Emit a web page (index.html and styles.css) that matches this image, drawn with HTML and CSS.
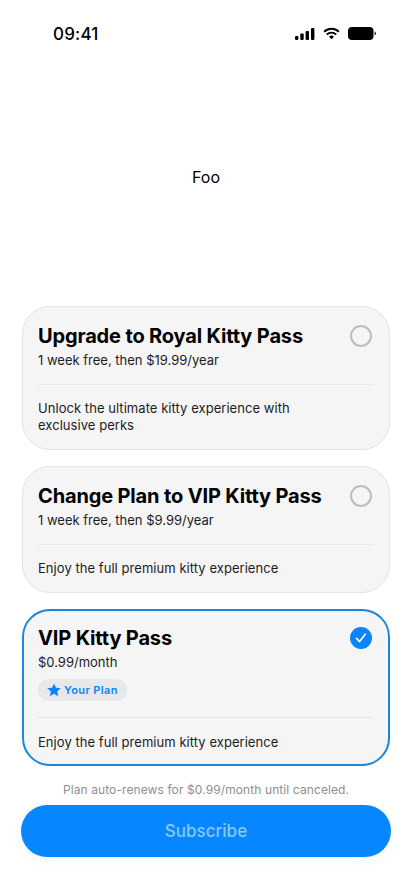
FILE: index.html
```html
<!DOCTYPE html>
<html lang="en">

<head>
    <meta charset="UTF-8">
    <meta name="viewport" content="width=device-width, initial-scale=1.0">
    <link rel="stylesheet" href="styles.css">
    <title>Kitty Pass</title>
</head>

<body>
    <div class="status-bar">
        <span class="status-time">09:41</span>
        <div class="status-icons">
            <svg class="icon-signal" width="20" height="12" viewBox="0 0 20 12">
                <rect x="0" y="8" width="3.4" height="4" rx="1.2"/>
                <rect x="5.3" y="5.5" width="3.4" height="6.5" rx="1"/>
                <rect x="10.6" y="3" width="3.4" height="9" rx="1"/>
                <rect x="16" y="0" width="3.4" height="12" rx="1"/>
            </svg>
            <svg class="icon-wifi" width="17" height="13" viewBox="0 0 18 13">
                <path d="M1.2 4.6a11.2 11.2 0 0 1 15.6 0" fill="none" stroke="#000" stroke-width="2"/>
                <path d="M4 7.6a7.2 7.2 0 0 1 10 0" fill="none" stroke="#000" stroke-width="2"/>
                <path d="M9 12.6 6.4 9.9a3.7 3.7 0 0 1 5.2 0z"/>
            </svg>
            <svg class="icon-battery" width="28" height="13" viewBox="0 0 28 13">
                <rect x="0" y="0" width="25.5" height="13" rx="4"/>
                <path d="M26.6 4.6c.9.3 1.2 1 1.2 1.9s-.3 1.6-1.2 1.9z"/>
            </svg>
        </div>
    </div>

    <div class="hero">Foo</div>

    <div class="plans">
        <div class="plan">
            <div class="plan-head">
                <div class="plan-info">
                    <div class="plan-name">Upgrade to Royal Kitty Pass</div>
                    <div class="plan-price">1 week free, then $19.99/year</div>
                </div>
                <span class="radio"></span>
            </div>
            <div class="plan-desc">Unlock the ultimate kitty experience with exclusive perks</div>
        </div>

        <div class="plan">
            <div class="plan-head">
                <div class="plan-info">
                    <div class="plan-name">Change Plan to VIP Kitty Pass</div>
                    <div class="plan-price">1 week free, then $9.99/year</div>
                </div>
                <span class="radio"></span>
            </div>
            <div class="plan-desc">Enjoy the full premium kitty experience</div>
        </div>

        <div class="plan selected">
            <div class="plan-head">
                <div class="plan-info">
                    <div class="plan-name">VIP Kitty Pass</div>
                    <div class="plan-price">$0.99/month</div>
                    <div class="badge">
                        <svg width="14" height="14" viewBox="0 0 24 24">
                            <path d="M12 .8l3.4 7.4 8.1.9-6 5.5 1.7 8-7.2-4.1-7.2 4.1 1.7-8-6-5.5 8.1-.9z"/>
                        </svg>
                        Your Plan
                    </div>
                </div>
                <span class="radio checked">
                    <svg width="14" height="14" viewBox="0 0 14 14">
                        <path d="M2.6 7.4l3 3.2 5.6-7.4" fill="none" stroke="#fff" stroke-width="1.7" stroke-linecap="round" stroke-linejoin="round"/>
                    </svg>
                </span>
            </div>
            <div class="plan-desc">Enjoy the full premium kitty experience</div>
        </div>
    </div>

    <div class="footer">
        <div class="renew-note">Plan auto-renews for $0.99/month until canceled.</div>
        <div class="subscribe-btn">Subscribe</div>
    </div>
</body>

</html>
```

FILE: styles.css
```css
/* Reset and global styles */
body {
    font-family: Inter, "Noto Sans", sans-serif;
    margin: 0;
    padding: 0;
    width: 412px;
    height: 896px;
    overflow: hidden;
    background-color: #fff;
    color: #000;
    display: flex;
    flex-direction: column;
}

/* Status bar */
.status-bar {
    height: 54px;
    flex-shrink: 0;
    padding: 0 36px 0 53px;
    box-sizing: border-box;
    display: flex;
    justify-content: space-between;
    align-items: flex-start;
}

.status-time {
    font-size: 17px;
    font-weight: 500;
    line-height: 68px;
    height: 54px;
    letter-spacing: 0.2px;
}

.status-icons {
    display: flex;
    align-items: center;
    gap: 8px;
    padding-top: 27px;
}

.status-icons svg {
    display: block;
}

/* Hero area */
.hero {
    flex: 1;
    display: flex;
    align-items: center;
    justify-content: center;
    font-size: 16px;
    padding-bottom: 6px;
}

/* Plan cards */
.plans {
    display: flex;
    flex-direction: column;
    gap: 16px;
    padding: 0 22px;
}

.plan {
    background-color: #f5f5f6;
    border: 1px solid #e4e4e6;
    border-radius: 28px;
    padding: 16px 15px 15px;
}

.plan.selected {
    border: 2px solid #1a86dc;
    padding: 14px 14px 13px;
}

.plan.selected .plan-head {
    padding-bottom: 16px;
}

.plan.selected .plan-desc {
    margin-top: 16px;
}

.plan-head {
    display: flex;
    justify-content: space-between;
    align-items: flex-start;
    padding-bottom: 15px;
    border-bottom: 1px solid #e7e7e9;
}

.plan-name {
    font-size: 20px;
    font-weight: 700;
    line-height: 26px;
    letter-spacing: -0.15px;
}

.plan-price {
    font-size: 13px;
    line-height: 18px;
    margin-top: 2px;
    color: #1c1c1e;
}

.radio {
    width: 22px;
    height: 22px;
    box-sizing: border-box;
    border: 2px solid #bdbdc0;
    border-radius: 50%;
    margin: 2px 2px 0 0;
    display: flex;
    align-items: center;
    justify-content: center;
}

.radio.checked {
    background-color: #0a84ff;
    border: none;
}

.badge {
    display: inline-flex;
    align-items: center;
    gap: 3px;
    height: 22px;
    margin-top: 8px;
    padding: 0 9px;
    border-radius: 11px;
    background-color: #e8e8ea;
    color: #0a84ff;
    font-size: 11px;
    font-weight: 600;
    letter-spacing: 0.4px;
}

.badge svg {
    fill: #0a84ff;
}

.plan-desc {
    margin-top: 15px;
    font-size: 13px;
    line-height: 17px;
    letter-spacing: 0.05px;
    color: #1c1c1e;
    padding-right: 40px;
}

/* Footer */
.footer {
    padding: 16px 21px 39px;
}

.renew-note {
    text-align: center;
    font-size: 12px;
    line-height: 16px;
    letter-spacing: 0.1px;
    color: #8e8e93;
    margin-bottom: 7px;
}

.subscribe-btn {
    height: 52px;
    border-radius: 26px;
    background-color: #0787ff;
    color: #86c9ff;
    font-size: 17px;
    font-weight: 500;
    display: flex;
    align-items: center;
    justify-content: center;
    box-shadow: 0 4px 12px rgba(10, 132, 255, 0.05);
}
```
